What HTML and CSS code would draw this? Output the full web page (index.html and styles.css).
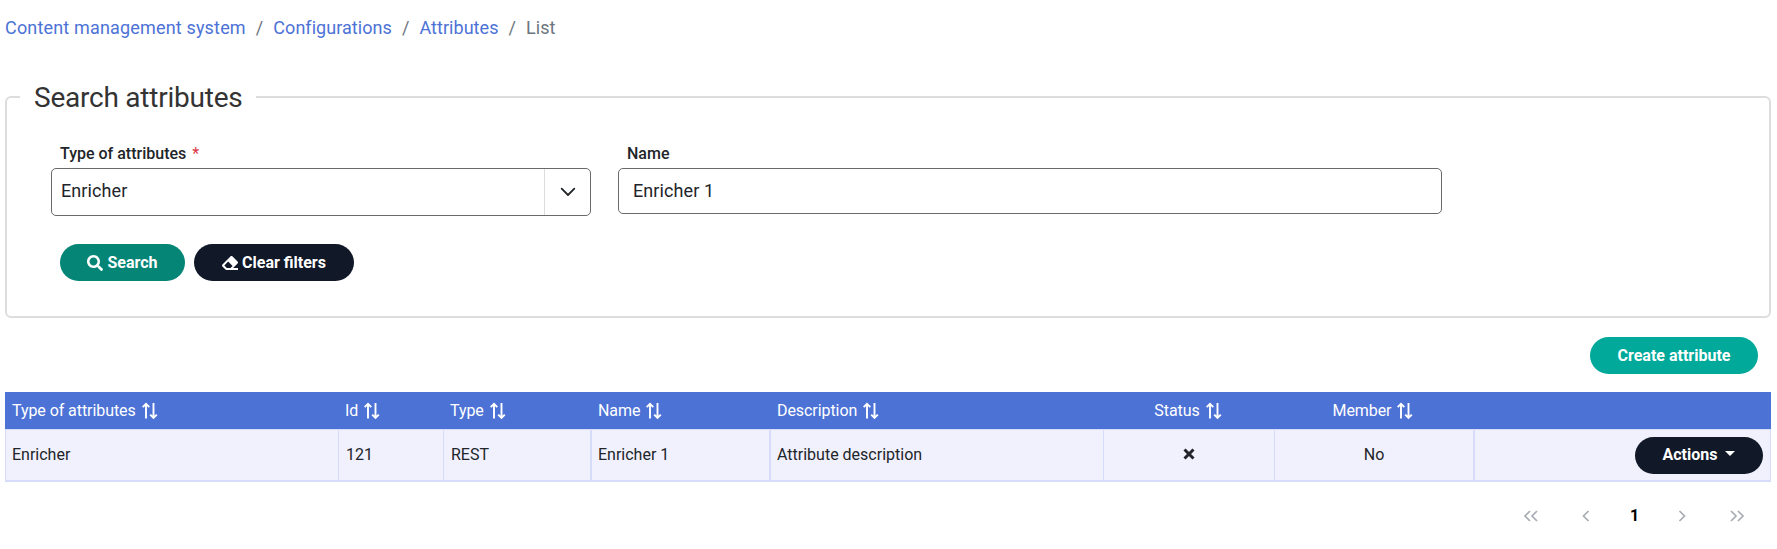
FILE: index.html
```html
<!DOCTYPE html>
<html lang="en">
<head>
<meta charset="utf-8">
<title>Attributes</title>
<link rel="stylesheet" href="styles.css">
</head>
<body>
<svg class="defs" width="0" height="0">
  <symbol id="sort" viewBox="0 0 18 18"><path d="M5 16.500V2M1.700 5.200 5 1.900l3.300 3.300M12.500 1v14.600M9.200 12.600l3.300 3.300 3.300-3.300"/></symbol>
</svg>
<nav class="breadcrumb">
  <a>Content management system</a><span>/</span><a>Configurations</a><span>/</span><a>Attributes</a><span>/</span><b>List</b>
</nav>
<fieldset class="panel">
  <legend>Search attributes</legend>
  <div class="fields">
    <div class="field field-type">
      <label>Type of attributes <i>*</i></label>
      <div class="select"><span>Enricher</span>
        <div class="toggle"><svg width="16" height="16" viewBox="0 0 16 16"><path d="m1.700 4.700 6.300 6.300 6.300-6.300"/></svg></div>
      </div>
    </div>
    <div class="field field-name">
      <label>Name</label>
      <div class="input">Enricher 1</div>
    </div>
  </div>
  <div class="buttons">
    <button class="btn search"><svg width="16" height="16" viewBox="0 0 512 512"><path d="M505 442.700 405.300 343c-4.500-4.500-10.600-7-17-7H372c27.600-35.300 44-79.700 44-128C416 93.100 322.900 0 208 0S0 93.100 0 208s93.100 208 208 208c48.300 0 92.700-16.400 128-44v16.300c0 6.400 2.500 12.500 7 17l99.700 99.700c9.400 9.400 24.600 9.400 33.900 0l28.300-28.300c9.400-9.400 9.400-24.600.1-34zM208 336c-70.700 0-128-57.200-128-128 0-70.700 57.200-128 128-128 70.700 0 128 57.200 128 128 0 70.700-57.200 128-128 128z"/></svg>Search</button>
    <button class="btn dark"><svg width="16" height="16" viewBox="0 0 512 512"><path d="M497.900 273.900c18.700-18.700 18.700-49.100 0-67.900l-160-160c-18.700-18.700-49.100-18.700-67.900 0l-256 256c-18.700 18.700-18.700 49.100 0 67.900l96 96A48 48 0 0 0 144 480h356c6.600 0 12-5.400 12-12v-40c0-6.600-5.400-12-12-12H355.900zM195.300 204.700l144 144L272 416h-117.400l-80-80z"/></svg>Clear filters</button>
  </div>
</fieldset>
<div class="toolbar"><button class="btn create">Create attribute</button></div>
<table class="grid">
  <colgroup><col class="c1"><col class="c2"><col class="c3"><col class="c4"><col class="c5"><col class="c6"><col class="c7"><col></colgroup>
  <thead><tr>
    <th>Type of attributes<svg><use href="#sort"/></svg></th>
    <th>Id<svg><use href="#sort"/></svg></th>
    <th>Type<svg><use href="#sort"/></svg></th>
    <th class="wide">Name<svg><use href="#sort"/></svg></th>
    <th class="wide">Description<svg><use href="#sort"/></svg></th>
    <th class="center">Status<svg><use href="#sort"/></svg></th>
    <th class="center">Member<svg><use href="#sort"/></svg></th>
    <th></th>
  </tr></thead>
  <tbody><tr>
    <td>Enricher</td><td>121</td><td>REST</td><td class="wide">Enricher 1</td><td class="wide">Attribute description</td>
    <td class="center"><svg class="cross" width="12" height="12" viewBox="0 0 12 12"><path d="m1.500 1.500 9 9m0-9-9 9"/></svg></td>
    <td class="center">No</td>
    <td class="wide right"><button class="btn dark actions">Actions<span class="caret"></span></button></td>
  </tr></tbody>
</table>
<div class="pager">
  <svg class="double" width="16" height="12" viewBox="0 0 16 12"><path d="M7 1 2 6l5 5M14 1 9 6l5 5"/></svg>
  <svg class="single" width="8" height="12" viewBox="0 0 8 12"><path d="M6.500 1 1.500 6l5 5"/></svg>
  <span>1</span>
  <svg class="single" width="8" height="12" viewBox="0 0 8 12"><path d="m1.500 1 5 5-5 5"/></svg>
  <svg class="double" width="16" height="12" viewBox="0 0 16 12"><path d="m2 1 5 5-5 5M9 1l5 5-5 5"/></svg>
</div>
</body>
</html>
```

FILE: styles.css
```css
* { box-sizing: border-box; }
body {
  margin: 0;
  padding: 14px 6px 0 5px;
  height: 549px;
  overflow: hidden;
  background: #fff;
  color: #212529;
  font: 400 16px/24px Roboto, sans-serif;
}
.defs { position: absolute; }
.breadcrumb { font-size: 18px; line-height: 27px; height: 65px; color: #6c757d; display: flex; letter-spacing: 0.05px; }
.breadcrumb a { color: #4c72d6; }
.breadcrumb a:first-child { letter-spacing: 0.17px; }
.breadcrumb b { font-weight: 400; }
.breadcrumb span { padding: 0 10px; }
.panel {
  margin: 0;
  padding: 26px 44px 0;
  height: 239px;
  border: 2px solid #ddd;
  border-radius: 6px;
}
.panel legend {
  margin-left: -31px;
  padding: 1px 13px 0 14px;
  height: 36px;
  color: #333;
  font-size: 28px;
  line-height: 36px;
  letter-spacing: -0.23px;
}
.fields { display: flex; gap: 27px; }
.field label { display: block; height: 27px; padding-left: 9px; font-weight: 500; line-height: 25px; }
.field label i { margin-left: 2px; color: #dc3545; font-style: normal; font-weight: 400; }
.field-type { width: 540px; }
.field-name { width: 824px; }
.select, .input { border: 1px solid #6a6a6e; border-radius: 5px; font-size: 18px; letter-spacing: 0.1px; }
.select { display: flex; justify-content: space-between; height: 48px; padding-left: 9px; line-height: 44px; }
.toggle { display: flex; align-items: center; justify-content: center; width: 46px; border-left: 1px solid #ddd; }
.toggle path { fill: none; stroke: #212529; stroke-width: 1.800; stroke-linecap: round; stroke-linejoin: round; }
.input { height: 46px; padding-left: 14px; line-height: 44px; }
.buttons { display: flex; gap: 9px; padding: 28px 9px 0; }
.btn {
  display: inline-flex;
  align-items: center;
  justify-content: center;
  height: 37px;
  padding: 0;
  border: 0;
  border-radius: 19px;
  color: #fff;
  font: 700 16px/24px Roboto, sans-serif;
}
.btn svg { margin-right: 4px; fill: #fff; }
.search { width: 125px; background: #048576; }
.dark { width: 160px; background: #111827; }
.create { width: 168px; background: #00a99a; }
.actions { width: 128px; }
.caret { margin-left: 8px; margin-top: -3px; border: 5px solid transparent; border-top-color: #fff; border-bottom: 0; }
.toolbar { display: flex; justify-content: flex-end; padding: 19px 13px 18px 0; }
.grid { width: 100%; table-layout: fixed; border-collapse: separate; border-spacing: 0; }
.c1 { width: 333px; }
.c2 { width: 105px; }
.c3 { width: 147px; }
.c4 { width: 179px; }
.c5 { width: 334px; }
.c6 { width: 171px; }
.c7 { width: 199px; }
.grid th { height: 37px; padding: 0 0 0 7px; background: #4c72d6; color: #fff; font-weight: 400; text-align: left; letter-spacing: -0.07px; }
.grid th.wide { padding-left: 8px; }
.grid th svg { width: 18px; height: 18px; margin-left: 5px; vertical-align: -4px; fill: none; stroke: #fff; stroke-width: 1.900; }
.grid td {
  height: 53px;
  padding: 0 0 0 6px;
  background: #f1f1fe;
  border: solid #d7dcfa;
  border-width: 1px 0 2px 1px;
}
.grid td + td { padding-left: 7px; }
.grid td.wide { border-left-width: 2px; padding-left: 6px; }
.grid td:last-child { border-right-width: 1px; }
.grid th.center, .grid td.center { padding-left: 0; text-align: center; }
.grid td.right { padding: 0 7px 0 0; text-align: right; }
.right .btn { vertical-align: middle; }
.cross { vertical-align: 0; fill: none; stroke: #212529; stroke-width: 3; }
.pager { display: flex; align-items: center; justify-content: flex-end; padding: 22px 26px 0 0; font-weight: 700; color: #000; }
.pager path { fill: none; stroke: #a9acb3; stroke-width: 1.700; }
.pager .single { margin: 0 40px 0 44px; }
.pager span { width: 9px; text-align: center; }
.pager span + .single { margin: 0 43px 0 39px; }
.pager .double:first-child { margin-right: -1px; }
```
